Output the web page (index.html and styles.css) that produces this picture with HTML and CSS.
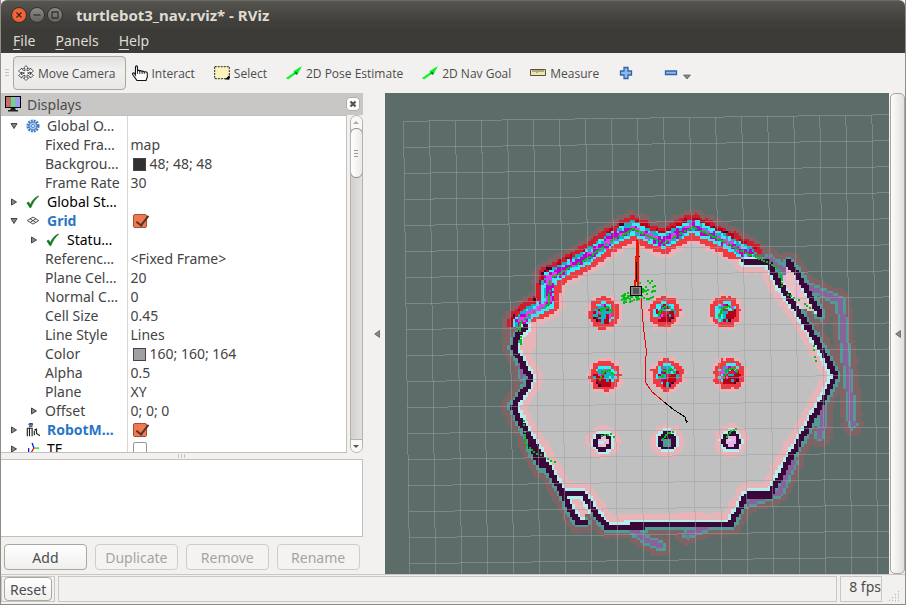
FILE: index.html
```html
<!DOCTYPE html>
<html lang="en">
<head>
<meta charset="utf-8">
<title>turtlebot3_nav.rviz* - RViz</title>
<link rel="stylesheet" href="styles.css">
</head>
<body>
<svg width="0" height="0" class="defs" aria-hidden="true">
  <defs>
    <symbol id="check" viewBox="0 0 16 16"><path d="M1 9l2-1 2 3C7 6 10 3 14 1l.5.5C10 5 8 9 5.500 14.500H4.500Z" fill="#14751c" stroke="#14751c" stroke-width=".7"/></symbol>
    <symbol id="arrow" viewBox="0 0 16 16"><path d="M0 13L8 7.500 7.500 6 16 1l-4 7.500-1-.5L2 14.500Z" fill="#0cf42c"/><path d="M8 8l3 2 1-2-2-1.500Z" fill="#068a1c"/></symbol>
    <symbol id="closed" viewBox="0 0 8 8"><path d="M1.500 1v6l5-3Z" fill="#888" stroke="#444" stroke-width="1"/></symbol>
    <symbol id="open" viewBox="0 0 8 8"><path d="M1 1.500h6l-3 5Z" fill="#888" stroke="#444" stroke-width="1"/></symbol>
  </defs>
</svg>
<div class="window">
  <header class="titlebar">
    <button class="wbtn close" aria-label="Close"><svg viewBox="0 0 16 16"><path d="M5.500 5.500l5 5m0-5l-5 5" stroke="#57200e" stroke-width="1.500"/></svg></button>
    <button class="wbtn" aria-label="Minimize"><svg viewBox="0 0 16 16"><path d="M4.500 8h7" stroke="#35342f" stroke-width="1.300"/></svg></button>
    <button class="wbtn" aria-label="Maximize"><svg viewBox="0 0 16 16"><path d="M5 5h6v6H5Z" fill="none" stroke="#35342f" stroke-width="1.300"/></svg></button>
    <h1>turtlebot3_nav.rviz* - RViz</h1>
  </header>
  <nav class="menubar">
    <button><u>F</u>ile</button><button><u>P</u>anels</button><button><u>H</u>elp</button>
  </nav>
  <div class="toolbar">
    <span class="grip"></span>
    <button class="tool active"><svg viewBox="0 0 16 16"><path d="M8 .5l2.500 3H9V6l3-1.500V3l3.500 3-3 2.500V7L9.500 8l3 1.500V8l3 2.500-3.500 2.500v-1.500L9 10v3h1.500L8 15.500 5.500 13H7v-3l-3 1.500V13L.5 10.500l3-2.500v1.500l3-1.500-3-1v1.500L.5 6 4 3v1.500L7 6V3.500H5.500Z" fill="#fff" stroke="#333" stroke-width=".8"/></svg>Move Camera</button>
    <button class="tool"><svg viewBox="0 0 16 16"><path d="M3.500 10V2c0-1.500 2-1.500 2 0v4c.4-1 2-.8 2.300.2.600-.9 2-.6 2.300.4.600-.8 2-.4 2.200.5 1.500-.8 3 0 3 1.300V12l-1.300 3.500h-9L.7 9.500C.2 8 1.800 7.300 2.500 8.500Z" fill="#fff" stroke="#111" stroke-width="1.100"/><path d="M5.500 5v4m2.300-3v3m2.300-2.500v2.500m2.200-2v2" stroke="#111" stroke-width=".8"/></svg>Interact</button>
    <button class="tool"><svg viewBox="0 0 16 16"><path d="M.7 1.700h14.600v12H.7Z" fill="#fdf3bd" stroke="#222" stroke-dasharray="2 1"/><path d="M15.500 10v4.500H11Z" fill="#000"/></svg>Select</button>
    <button class="tool"><svg viewBox="0 0 16 16"><use href="#arrow"/></svg>2D Pose Estimate</button>
    <button class="tool"><svg viewBox="0 0 16 16"><use href="#arrow"/></svg>2D Nav Goal</button>
    <button class="tool"><svg viewBox="0 0 16 16"><path d="M.5 4.500h15v6H.5Z" fill="#efe6a8" stroke="#55523f"/><path d="M3 5v2m2-2v2m2-2v3m2-3v2m2-2v2m2-2v2" stroke="#55523f" stroke-width=".8"/></svg>Measure</button>
    <button class="tool" aria-label="Add tool"><svg viewBox="0 0 16 16"><path d="M6 2.500h4V6h3.500v4H10v3.500H6V10H2.500V6H6Z" fill="#8fb9ea" stroke="#2f65a8" stroke-width="1.300"/></svg></button>
    <button class="tool drop" aria-label="Remove tool"><svg viewBox="0 0 16 16"><path d="M2.500 6h11v3.500h-11Z" fill="#8fb9ea" stroke="#2f65a8" stroke-width="1.300"/></svg><svg class="caret" viewBox="0 0 8 8"><path d="M.5 3h7L4 7Z" fill="#888" stroke="#555" stroke-width=".7"/></svg></button>
  </div>
  <main class="main">
    <section class="dock">
      <div class="docktitle">
        <svg class="ic" viewBox="0 0 16 16"><path d="M6 12h4l1 2H5Z" fill="#222"/><path d="M3 14h10v1.500H3Z" fill="#222"/><path d="M0 0h16v12H0Z" fill="#000"/><path d="M1 1h5v10H1Z" fill="#c56a6e"/><path d="M6 1h4v10H6Z" fill="#6bd97b"/><path d="M10 1h5v10h-5Z" fill="#9c9cf0"/></svg>
        <h2>Displays</h2>
        <button class="x" aria-label="Close Displays"><svg viewBox="0 0 8 8"><path d="M1.500 1.500l5 5m0-5l-5 5" stroke="#555" stroke-width="2.400"/></svg></button>
      </div>
      <div class="treewrap">
        <div class="tree">
          <table>
            <colgroup><col class="c1"><col></colgroup>
            <tbody>
            <tr><th><span class="n l0"><svg class="t"><use href="#open"/></svg><svg class="ic" viewBox="0 0 16 16"><circle cx="8" cy="8" r="6" fill="none" stroke="#3e79c2" stroke-width="3" stroke-dasharray="2.100 1.040"/><circle cx="8" cy="8" r="4.500" fill="#a6c8ef" stroke="#3e79c2"/><circle cx="8" cy="8" r="1.700" fill="#fff" stroke="#3e79c2"/></svg>Global O…</span></th><td></td></tr>
            <tr><th><span class="n p">Fixed Fra…</span></th><td>map</td></tr>
            <tr><th><span class="n p">Backgrou…</span></th><td><i class="sw dark"></i>48; 48; 48</td></tr>
            <tr><th><span class="n p">Frame Rate</span></th><td>30</td></tr>
            <tr class="k"><th><span class="n l0"><svg class="t"><use href="#closed"/></svg><svg class="ic"><use href="#check"/></svg>Global St…</span></th><td></td></tr>
            <tr><th><span class="n l0 b"><svg class="t"><use href="#open"/></svg><svg class="ic" viewBox="0 0 16 16"><path d="M8 3.500l6.500 4-6.500 4-6.500-4ZM4.700 5.500l6.500 4M11.300 5.500l-6.500 4" fill="none" stroke="#333"/></svg>Grid</span></th><td><input type="checkbox" checked aria-label="Grid"></td></tr>
            <tr class="k"><th><span class="n l1"><svg class="t"><use href="#closed"/></svg><svg class="ic"><use href="#check"/></svg>Statu…</span></th><td></td></tr>
            <tr><th><span class="n p">Referenc…</span></th><td>&lt;Fixed Frame&gt;</td></tr>
            <tr><th><span class="n p">Plane Cel…</span></th><td>20</td></tr>
            <tr><th><span class="n p">Normal C…</span></th><td>0</td></tr>
            <tr><th><span class="n p">Cell Size</span></th><td>0.45</td></tr>
            <tr><th><span class="n p">Line Style</span></th><td>Lines</td></tr>
            <tr><th><span class="n p">Color</span></th><td><i class="sw grey"></i>160; 160; 164</td></tr>
            <tr><th><span class="n p">Alpha</span></th><td>0.5</td></tr>
            <tr><th><span class="n p">Plane</span></th><td>XY</td></tr>
            <tr><th><span class="n l1 prop"><svg class="t"><use href="#closed"/></svg>Offset</span></th><td>0; 0; 0</td></tr>
            <tr><th><span class="n l0 b"><svg class="t"><use href="#closed"/></svg><svg class="ic" viewBox="0 0 16 16"><path d="M3 1.500C4 0 7 0 8 1.500Z" fill="#123a9c" stroke="#123a9c"/><path d="M3.500 3.500h4" stroke="#222" stroke-width="1.500"/><path d="M1.500 6v9M4 5v10M4 6h3v9M9.500 9v5M9.500 8l2.500-1v5l4 2.500M1 6h5" fill="none" stroke="#222" stroke-width="1.300"/></svg>RobotM…</span></th><td><input type="checkbox" checked aria-label="RobotModel"></td></tr>
            <tr class="k"><th><span class="n l0"><svg class="t"><use href="#closed"/></svg><svg class="ic" viewBox="0 0 16 16"><path d="M9 7L7 1" stroke="#11f" stroke-width="1.500"/><path d="M9 7h6" stroke="#0e0" stroke-width="1.500"/><path d="M9 7l-3 5" stroke="#e11" stroke-width="1.500"/><path d="M3 7v5" stroke="#11f" stroke-width="1.500"/><path d="M2 13h6" stroke="#fa0" stroke-width="1.500"/></svg>TF</span></th><td><input type="checkbox" aria-label="TF"></td></tr>
            </tbody>
          </table>
        </div>
        <div class="sbar"><span class="up"></span><span class="thumb"></span><span class="down"></span></div>
      </div>
      <div class="split"></div>
      <div class="help"></div>
      <div class="btns"><button>Add</button><button disabled>Duplicate</button><button disabled>Remove</button><button disabled>Rename</button></div>
    </section>
    <button class="collapse" aria-label="Hide left panel"><svg viewBox="0 0 6 8"><path d="M5.500.5v7L.7 4Z" fill="#888" stroke="#555" stroke-width=".7"/></svg></button>
    <svg class="view" viewBox="385 93 504 481" preserveAspectRatio="xMidYMid slice" shape-rendering="crispEdges" role="img" aria-label="Navigation map">
      <g id="costmap"></g>
      <g id="grid" stroke="#a0a0a4" stroke-opacity=".5"></g>
      <g fill="none">
        <path d="M637 240L635 288" stroke="#f41400" stroke-width="2"/>
        <path d="M639 256l-2 12M636 262v20" stroke="#200"/>
        <path d="M638 243V290" stroke="#f41400" stroke-width="2"/>
        <path d="M641 298L643 325 646 350 645 382 652 392 664 402" stroke="#f00000"/>
        <path d="M664 402L674 410 685 417V420L687 421 686 423" stroke="#000"/>
        <path d="M630.500 286.500h11v9h-11Z" fill="#8a8a86" stroke="#000"/>
        <path d="M633 288h6v6h-6Z" fill="#555"/>
      </g>
    </svg>
    <button class="collapse right" aria-label="Show right panel"><svg viewBox="0 0 6 8"><path d="M5.500.5v7L.7 4Z" fill="#888" stroke="#555" stroke-width=".7"/></svg></button>
  </main>
  <footer class="status">
    <div class="cell"><button>Reset</button></div>
    <div class="cell msg"></div>
    <div class="cell fps">8 fps</div>
    <svg class="size" viewBox="0 0 14 14"><path d="M2 12.500h12M5 9.500h9M8 6.500h6M11 3.500h3" stroke="#bbb" stroke-dasharray="1 2" stroke-width="1.500"/></svg>
  </footer>
</div>
<script src="map.js"></script>
</body>
</html>
```
FILE: styles.css
```css
* { box-sizing: border-box; }
body { margin: 0; font-family: "Noto Sans", "Open Sans", sans-serif; font-size: 14px; color: #4c4c4c; }
button { font: inherit; color: inherit; border: 0; background: none; padding: 0; margin: 0; }
svg { display: block; flex: none; }
h1, h2 { margin: 0; font-size: inherit; }
.defs { position: absolute; }
.window { height: 100vh; display: flex; flex-direction: column; background: #f2f1f0; border: 1px solid #8f8b85; border-top: 0; }
.titlebar { height: 28px; flex: none; display: flex; align-items: center; gap: 2px; padding-left: 10px; background: linear-gradient(#565550, #3f3e3a 80%); border-top: 1px solid #6d6b66; color: #dfdbd2; border-radius: 6px 6px 0 0; }
.titlebar h1 { font-size: 15px; line-height: 20px; font-weight: 700; margin-left: 11px; }
.wbtn { width: 16px; height: 16px; border-radius: 50%; background: linear-gradient(#8b8a84, #63625c); border: 1px solid #33322e; }
.wbtn svg { margin: -1px; width: 16px; height: 16px; }
.close { background: radial-gradient(#f9774c, #e0501f); }
.menubar { height: 25px; flex: none; display: flex; align-items: center; gap: 20px; padding-left: 12px; background: #3c3b37; color: #dfdbd2; }
.menubar u { text-underline-offset: 3px; }
.toolbar { height: 40px; flex: none; display: flex; align-items: center; font-family: "Open Sans", sans-serif; font-size: 12px; }
.grip { width: 4px; height: 8px; margin: 0 4px; background: repeating-linear-gradient(#c4c2be 0 1px, transparent 1px 3px); }
.tool { height: 34px; display: flex; align-items: center; gap: 4px; padding: 0 10px 0 9px; }
.tool svg { width: 16px; height: 16px; }
.tool.active { border: 1px solid #aaa6a0; border-radius: 4px; background: linear-gradient(#e2e1df, #f1f0ef 40%, #e8e7e5); padding: 0 9px 0 4px; }
.tool.active + .tool { padding-left: 6px; }
.drop { padding-left: 19px; }
.tool .caret { width: 8px; height: 8px; margin-top: 5px; }
.main { flex: 1; min-height: 0; display: grid; grid-template-columns: 40% 22px 1fr 16px; }
.dock { display: flex; flex-direction: column; min-height: 0; }
.docktitle { height: 22px; flex: none; display: flex; align-items: center; gap: 6px; padding: 0 3px 0 4px; background: #c8c7c6; }
.docktitle h2 { font-weight: 400; flex: 1; }
.ic { width: 16px; height: 16px; }
.x { width: 14px; height: 14px; display: grid; place-items: center; background: #fff; border: 1px solid #b0aeaa; border-radius: 4px; }
.x svg { width: 8px; height: 8px; }
.treewrap { flex: 1; min-height: 0; display: flex; gap: 3px; }
.tree { flex: 1; overflow: hidden; background: #fff; border: 1px solid #c3c0bb; border-left: 0; }
table { width: 100%; table-layout: fixed; border-collapse: collapse; line-height: 19px; color: #444; }
.c1 { width: 126px; }
th, td { height: 19px; padding: 0; text-align: left; font-weight: 400; white-space: nowrap; }
th { border-right: 1px solid #d8d6d3; }
td { padding-left: 3px; }
.n { display: flex; align-items: center; height: 19px; }
.t { width: 8px; height: 8px; }
.l0 { padding-left: 9px; }
.l1 { padding-left: 29px; }
.n .ic { width: 14px; height: 14px; margin: 0 7px 0 8px; }
.prop .t { margin-right: 7px; }
.p { padding-left: 44px; }
.k { color: #000; }
.b { color: #2a76c6; font-weight: 700; }
.sw { display: inline-block; width: 13px; height: 13px; border: 1px solid #444; margin: 0 4px 0 2px; vertical-align: -2px; }
.dark { background: #303030; }
.grey { background: #a0a0a4; }
input { appearance: none; display: block; width: 14px; height: 14px; margin: 0 0 0 2px; border: 1px solid #99958e; border-radius: 2px; background: #fff; }
input:checked { border-color: #a35036; background: #ee7a52; position: relative; }
input:checked::after { content: ""; position: absolute; left: 5px; top: -2px; width: 5px; height: 11px; border: solid #5a3326; border-width: 0 2px 2px 0; transform: rotate(38deg); }
.sbar { width: 13px; display: flex; flex-direction: column; border: 1px solid #b5b2ad; border-radius: 7px; background: linear-gradient(90deg, #d2d0ce, #e2e1e0); overflow: hidden; }
.up, .down { height: 13px; flex: none; background: #f8f8f7; display: grid; place-items: center; }
.up::after, .down::after { content: ""; border: 3px solid transparent; border-top: 0; border-bottom: 3px solid #aaa; }
.down { margin-top: auto; border-top: 1px solid #b5b2ad; }
.down::after { border-bottom: 0; border-top: 3px solid #555; }
.thumb { height: 50px; flex: none; border: 1px solid #908d88; border-radius: 6px; margin: -1px; background: repeating-linear-gradient(#999 0 1px, transparent 1px 3px) center / 4px 7px no-repeat, linear-gradient(90deg, #fff, #eceae8); }
.split { height: 6px; flex: none; background: repeating-linear-gradient(90deg, #c6c4c0 0 1px, transparent 1px 3px) center / 7px 4px no-repeat; }
.help { height: 78px; flex: none; background: #fff; border: 1px solid #c3c0bb; border-left: 0; }
.btns { flex: none; display: grid; grid-template-columns: repeat(4, 1fr); gap: 8px; padding: 7px 3px 4px; }
.btns button, .cell button { height: 26px; border: 1px solid #aaa6a0; border-radius: 4px; background: linear-gradient(#fff, #f0efee); }
.btns button:disabled { color: #a5a4a2; border-color: #d0cdc9; background: #f4f3f2; }
.collapse { display: grid; place-items: center end; padding-right: 5px; }
.collapse svg { width: 6px; height: 8px; }
.right { border: 1px solid #a8a5a0; border-radius: 5px; background: linear-gradient(90deg, #fcfcfc, #e2e0de); margin-left: 1px; padding-right: 3px; }
.view { width: 100%; height: 100%; min-height: 0; background: #5b6c69; }
.status { height: 30px; flex: none; display: flex; align-items: center; gap: 3px; border-top: 1px solid #c9c7c4; padding: 1px 4px 2px 0; }
.cell { height: 26px; border: 1px solid #c9c7c4; display: flex; align-items: center; }
.cell button { height: 24px; padding: 0 5px; margin: 0 2px; }
.msg { flex: 1; }
.fps { padding: 0 0 5px 8px; }
.size { width: 14px; height: 14px; align-self: flex-end; margin-left: 2px; }
```
FILE: map.js
```js
// Costmap cells are coloured by their distance to the nearest obstacle.
const CELL = 2.6;
const X0 = 385, Y0 = 93, W = 504, H = 481;

const scan = [[520,343],[519,323],[526,315],[548,303],[549,278],[563,270],[587,257],[610,240],[632,228],[647,235],[663,242],[677,234],[692,226],[707,233],[730,244],[750,255]];
const walls = [
  [[525,328],[518,335],[513,348],[530,377],[528,385],[513,407],[525,430],[545,463],[563,494],[583,494],[596,514],[607,527],[660,525],[730,525],[747,495],[770,495],[783,470],[800,440],[823,400],[835,376],[820,347],[795,307],[780,285],[768,262],[745,261]],
  [[563,494],[569,508],[578,522],[584,522]],
  [[788,263],[796,272],[808,293],[820,315]],
  [[530,445],[541,466]]
];
const ghosts = [
  [[768,258],[778,266],[803,285],[822,293],[840,301],[843,333],[848,380],[852,425]],
  [[823,398],[820,436]],
  [[633,530],[646,540],[661,546]],
  [[687,534],[704,528]],
  [[747,503],[765,497],[779,492],[793,462]],
  [[521,362],[522,376]]
];
const free = scan.concat([[768,262],[780,285],[795,307],[820,347],[835,376],[823,400],[800,440],[783,470],[770,495],[747,495],[730,524],[607,526],[583,494],[563,494],[545,463],[525,430],[513,407],[528,385],[530,377],[513,348]]);
const pocket = [[788,263],[820,315],[797,307],[780,285]];
const chamber = [[563,494],[583,494],[592,510],[580,522]];
const lit = [[604,313],[664,312],[725,312],[605,376],[667,375],[729,374]];
const rings = [[603,442],[667,441],[731,441]];

function hash(i, j) {
  const s = Math.sin(i * 127.1 + j * 311.7) * 43758.5453;
  return s - Math.floor(s);
}
function dist(x, y, line) {
  let best = 1e9;
  for (let k = 1; k < line.length; k++) {
    const [ax, ay] = line[k - 1], [bx, by] = line[k];
    const dx = bx - ax, dy = by - ay;
    const t = Math.max(0, Math.min(1, ((x - ax) * dx + (y - ay) * dy) / (dx * dx + dy * dy)));
    best = Math.min(best, Math.hypot(x - ax - t * dx, y - ay - t * dy));
  }
  return best;
}
function inside(x, y, poly) {
  let c = false;
  for (let i = 0, j = poly.length - 1; i < poly.length; j = i++) {
    const [xi, yi] = poly[i], [xj, yj] = poly[j];
    if ((yi > y) !== (yj > y) && x < (xj - xi) * (y - yi) / (yj - yi) + xi) c = !c;
  }
  return c;
}
const near = (x, y, pts) => Math.min(...pts.map(p => Math.hypot(x - p[0], y - p[1])));

function colour(x, y, i, j) {
  const r = hash(i, j), n = (r - 0.5) * 2;
  const patch = hash(Math.floor(i / 2) + 40, Math.floor(j / 2) + 7);
  const isFree = inside(x, y, free) || inside(x, y, pocket) || inside(x, y, chamber);
  const s = dist(x, y, scan);
  const blob = near(x, y, lit);
  const ring = near(x, y, rings);
  const w = Math.min(...walls.map(l => dist(x, y, l)));
  const g = Math.min(...ghosts.map(l => dist(x, y, l)));
  if (s < 12 + n && y < 326 - Math.max(0, x - 518) * 0.3) {
    if (s < 2.4) return patch < 0.6 ? '#e53cf0' : '#c000c8';
    if (s < 4.6) return r < 0.3 ? '#c000c8' : r < 0.65 ? '#14b0c4' : '#33e8f0';
    if (s < 6.6) return isFree || patch < 0.55 ? '#33f0f8' : '#14b0c4';
    if (!isFree && s < 9.5) return patch < 0.12 ? '#3a0838' : patch < 0.55 ? '#b80018' : '#d01c2c';
    return isFree ? '#f03a42' : '#d01c2c';
  }
  if (blob < 15.5 + n * 1.3) {
    if (blob > 11) return '#f03a42';
    const p = lit.find(q => Math.hypot(x - q[0], y - q[1]) < 20);
    const low = (y - p[1]) + (p[0] < 650 ? p[0] - x : x - p[0]) * 0.8;
    if (low > 12) return '#3a0838';
    if (low > 4) return r < 0.15 ? '#14b0c4' : '#b80018';
    if (blob < 3.5) return patch < 0.5 ? '#d02038' : '#14b0c4';
    if (blob > 8.5) return r < 0.7 ? '#33f0f8' : '#f03a42';
    return r < 0.2 ? '#33f0f8' : r < 0.55 ? '#14b0c4' : r < 0.72 ? '#e53cf0' : r < 0.87 ? '#c000c8' : '#b80018';
  }
  if (blob < 18 + n * 2) return '#e9b4b8';
  if (ring < 17 + n) {
    if (ring > 12) return '#e9b4b8';
    if (ring > 9.5) return '#b5eeec';
    if (ring > 5.2) return '#3a0838';
    if (x > 650 && x < 690) return y > 438 ? '#519a96' : '#3a0838';
    return r < 0.4 ? '#eab0ec' : r < 0.7 ? '#e9c4c8' : '#b5eeec';
  }
  if (w < 2.9) return '#3a0838';
  if (isFree) {
    if (inside(x, y, pocket) && w > 4) return r < 0.2 ? '#eab0ec' : '#e9c0c4';
    if (w < 5.6) return '#b5eeec';
    if (w < 12 + n) return '#e9b4b8';
    if (s < 16 + n) return '#e9b4b8';
    return '#c0c0c0';
  }
  if (g < 2.6) return '#86639a';
  if (w < 5.6 || g < 5) return '#519a96';
  if (w < 11.5 + n || g < 10.5 + n || s < 17 + n) return '#7f6465';
  return null;
}

const runs = {};
for (let j = 0; j * CELL < H; j++) {
  for (let i = 0; i * CELL < W; i++) {
    const x = X0 + i * CELL, y = Y0 + j * CELL;
    const c = colour(x + CELL / 2, y + CELL / 2, i, j);
    if (c) (runs[c] = runs[c] || []).push(`M${x.toFixed(1)} ${y.toFixed(1)}h${CELL}v${CELL}h-${CELL}Z`);
  }
}
const NS = 'http://www.w3.org/2000/svg';
function add(parent, name, attrs) {
  const el = document.createElementNS(NS, name);
  for (const k in attrs) el.setAttribute(k, attrs[k]);
  document.getElementById(parent).appendChild(el);
}
for (const c in runs) add('costmap', 'path', { d: runs[c].join(''), fill: c });

// Laser returns
let laser = '';
const dot = (x, y) => { laser += `M${Math.round(x)} ${Math.round(y)}h2v2h-2Z`; };
const trail = (line, step, keep) => {
  for (let k = 1; k < line.length; k++) {
    const [ax, ay] = line[k - 1], [bx, by] = line[k];
    const m = Math.ceil(Math.hypot(bx - ax, by - ay) / step);
    for (let q = 0; q < m; q++) if (hash(q, k + ax) < keep) dot(ax + (bx - ax) * q / m, ay + (by - ay) * q / m);
  }
};
trail(scan, 2, 0.7);
trail([[750,254],[766,261],[779,268],[782,290]], 3, 0.8);
trail([[787,294],[798,299],[812,309]], 4, 0.7);
trail([[813,345],[815,364]], 4, 0.9);
trail([[523,420],[524,442],[533,451],[557,463]], 4, 0.8);
for (const [x, y] of lit) trail([[x - 6, y + 3],[x - 4, y - 5],[x + 3, y - 7],[x + 8, y - 2]], 2, 0.8);
trail([[601,435],[610,433],[616,438]], 4, 0.9);
trail([[662,438],[667,432],[674,431]], 3, 0.9);
trail([[726,436],[730,430],[738,427]], 3, 0.9);
for (let k = 0; k < 56; k++) {
  const a = hash(k, 5) - 0.5, b = hash(k, 9) - 0.5;
  dot(630 + a * 18, 296 + b * 9 - a * 5);
  if (k % 2) dot(647 + a * 16, 289 + b * 20);
}
add('costmap', 'path', { d: laser, fill: '#00c010' });

// Reference grid, turned slightly anticlockwise
for (let k = 0; k <= 20; k++) {
  const o = k * 26;
  add('grid', 'line', { x1: 403.5 + o, y1: 121.5 - o / 75, x2: 410.5 + o, y2: 641 });
  add('grid', 'line', { x1: 403.5 + o / 75, y1: 121.5 + o, x2: 923, y2: 114.5 + o });
}
```
